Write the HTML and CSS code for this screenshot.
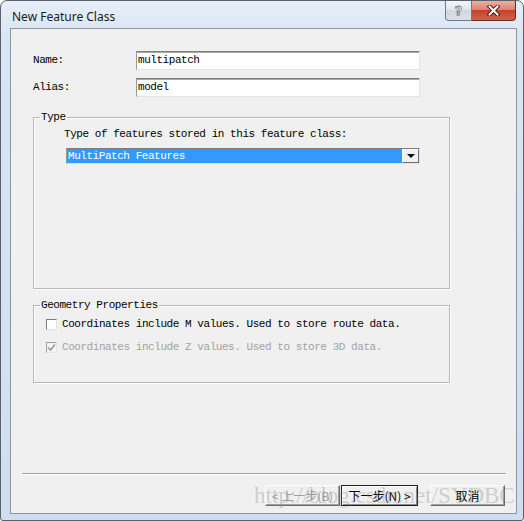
FILE: index.html
```html
<!DOCTYPE html>
<html lang="en">
  <head>
    <meta charset="UTF-8" />
    <title>New Feature Class</title>
    <link rel="stylesheet" href="styles.css">
  </head>
  <body>
    <div class="window">
      <div class="titlebar">
        <span class="title">New Feature Class</span>
        <div class="caption-btns">
          <span class="cap-btn cap-help">?</span>
          <span class="cap-btn cap-close">
            <svg width="13" height="11" viewBox="0 0 13 11">
              <path d="M2.5 1.5 L10.5 9.5 M10.5 1.5 L2.5 9.5" stroke="#4a1510" stroke-width="4" stroke-linecap="square" fill="none"/>
              <path d="M2.5 1.5 L10.5 9.5 M10.5 1.5 L2.5 9.5" stroke="#ffffff" stroke-width="2" stroke-linecap="square" fill="none"/>
            </svg>
          </span>
        </div>
      </div>

      <div class="client">
        <div class="form-row first">
          <span class="field-label mono">Name:</span>
          <span class="textbox mono">multipatch</span>
        </div>
        <div class="form-row">
          <span class="field-label mono">Alias:</span>
          <span class="textbox mono">model</span>
        </div>

        <fieldset class="group group-type">
          <legend class="mono">Type</legend>
          <div class="type-body">
            <p class="hint mono">Type of features stored in this feature class:</p>
            <div class="combo">
              <span class="combo-value mono">MultiPatch Features</span>
              <span class="combo-arrow"></span>
            </div>
          </div>
        </fieldset>

        <fieldset class="group group-geom">
          <legend class="mono">Geometry Properties</legend>
          <div class="geom-body">
            <div class="check-row">
              <span class="checkbox"></span>
              <span class="mono">Coordinates include M values. Used to store route data.</span>
            </div>
            <div class="check-row disabled">
              <span class="checkbox checked">
                <svg width="9" height="9" viewBox="0 0 9 9">
                  <path d="M1 4.5 L3.5 7 L8 1.5" stroke="#9a9a9a" stroke-width="1.6" fill="none"/>
                </svg>
              </span>
              <span class="mono">Coordinates include Z values. Used to store 3D data.</span>
            </div>
          </div>
        </fieldset>

        <div class="separator"></div>

        <div class="buttons">
          <button class="btn btn-back" disabled>&lt; 上一步(B)</button>
          <button class="btn btn-default">下一步(N) &gt;</button>
          <button class="btn btn-cancel">取消</button>
        </div>

        <div class="watermark">http://blog.csdn.net/SYDBC</div>
      </div>
    </div>
  </body>
</html>
```

FILE: styles.css
```css
* {
  box-sizing: border-box;
  margin: 0;
  padding: 0;
}
body {
  background: #ffffff;
  font-family: "Noto Sans", sans-serif;
  color: #000;
}
.mono {
  font-family: "Liberation Mono", monospace;
  font-size: 11px;
  letter-spacing: -0.45px;
  line-height: 13px;
}

/* window frame */
.window {
  width: 524px;
  height: 521px;
  display: flex;
  flex-direction: column;
  border: 1px solid #5b6169;
  border-radius: 7px 7px 3px 3px;
  background: linear-gradient(#e6eef8, #d9e5f3 40px, #cfdeef);
  padding: 0 6px 6px 9px;
}
.titlebar {
  height: 27px;
  display: flex;
  align-items: flex-start;
}
.title {
  font-size: 12px;
  line-height: 16px;
  padding: 8px 0 0 2px;
  color: #1a1a1a;
}
.caption-btns {
  margin-left: auto;
  margin-right: 1px;
  display: flex;
}
.cap-btn {
  height: 20px;
  display: flex;
  align-items: center;
  justify-content: center;
}
.cap-help {
  width: 27px;
  border: 1px solid #6f7b88;
  border-top: none;
  border-radius: 0 0 0 4px;
  background: linear-gradient(#f3f6f9, #e2e7ed 45%, #cfd6de 50%, #dbe1e8);
  font-family: "DejaVu Sans", sans-serif;
  font-weight: bold;
  font-size: 13px;
  color: #f7f8fa;
  -webkit-text-stroke: 0.8px #6a7481;
}
.cap-close {
  width: 44px;
  border: 1px solid #6a2a24;
  border-top: none;
  border-left: none;
  border-radius: 0 0 4px 0;
  background: linear-gradient(#eab0a2, #db8573 45%, #c8412f 50%, #d3604a);
}

/* client area */
.client {
  position: relative;
  flex: 1;
  display: flex;
  flex-direction: column;
  background: #f0f0f0;
  border: 1px solid #8a96a4;
  padding-bottom: 7px;
}
.form-row {
  display: flex;
  align-items: center;
  height: 19px;
  margin: 8px 0 0 22px;
}
.form-row.first {
  margin-top: 22px;
}
.field-label {
  width: 103px;
}
.textbox {
  width: 284px;
  height: 19px;
  background: #fff;
  border: 1px solid;
  border-color: #7d7d7d #e3e3e3 #e3e3e3 #9a9a9a;
  box-shadow: inset 0 1px 0 #a9a9a9;
  padding: 2px 0 0 1px;
}

/* group boxes */
.group {
  margin-left: 22px;
  width: 417px;
  border: 1px solid #b7b7b7;
  box-shadow: 1px 1px 0 #fff, inset 1px 1px 0 #fff;
  padding: 0;
}
.group legend {
  margin-left: 6px;
  padding: 0 1px;
}
.group-type {
  margin-top: 14px;
  height: 178px;
}
.type-body {
  padding: 4px 0 0 30px;
}
.combo {
  display: flex;
  width: 354px;
  height: 16px;
  margin: 7px 0 0 2px;
  border: 1px solid;
  border-color: #7d7d7d #e3e3e3 #e3e3e3 #9a9a9a;
  background: #fff;
}
.combo-value {
  flex: 1;
  background: #3399ff;
  color: #fff;
  padding-left: 1px;
  line-height: 14px;
}
.combo-arrow {
  width: 17px;
  border: 1px solid;
  border-color: #f8f8f8 #6e6e6e #6e6e6e #f8f8f8;
  background: #f0f0f0;
  display: flex;
  align-items: center;
  justify-content: center;
}
.combo-arrow::after {
  content: "";
  border-left: 4px solid transparent;
  border-right: 4px solid transparent;
  border-top: 4px solid #000;
}
.group-geom {
  margin-top: 10px;
  height: 84px;
}
.geom-body {
  padding: 6px 0 0 12px;
}
.check-row {
  display: flex;
  align-items: center;
  gap: 5px;
  height: 13px;
}
.check-row + .check-row {
  margin-top: 10px;
}
.checkbox {
  width: 11px;
  height: 11px;
  background: #fff;
  border: 1px solid;
  border-color: #7d7d7d #e3e3e3 #e3e3e3 #7d7d7d;
  display: flex;
  align-items: center;
  justify-content: center;
}
.check-row.disabled {
  color: #a2a2a2;
}
.checkbox.checked {
  background: #f4f4f4;
  border-color: #a0a0a0 #e6e6e6 #e6e6e6 #a0a0a0;
}

/* bottom */
.separator {
  margin: auto 10px 0 11px;
  height: 2px;
  border-top: 1px solid #a0a0a0;
  border-bottom: 1px solid #fff;
}
.buttons {
  display: flex;
  justify-content: flex-end;
  margin-top: 10px;
  padding-right: 11px;
}
.btn {
  width: 75px;
  height: 21px;
  font-family: "Noto Sans CJK SC", sans-serif;
  font-size: 12px;
  line-height: 17px;
  color: #000;
  background: #f0f0f0;
  border: 1px solid;
  border-color: #fff #6b6b6b #6b6b6b #fff;
  box-shadow: inset -1px -1px 0 #a0a0a0;
}
.btn-back {
  color: #a0a0a0;
  margin-right: 1px;
}
.btn-default {
  width: 77px;
  border-color: #1e1e1e;
  box-shadow: inset 1px 1px 0 #fff, inset -1px -1px 0 #8a8a8a;
  margin-right: 12px;
}
.watermark {
  position: absolute;
  left: 243px;
  top: 455px;
  font-family: "Liberation Serif", serif;
  font-size: 23px;
  line-height: 23px;
  color: rgba(130, 130, 130, 0.32);
  white-space: nowrap;
  pointer-events: none;
}
```
